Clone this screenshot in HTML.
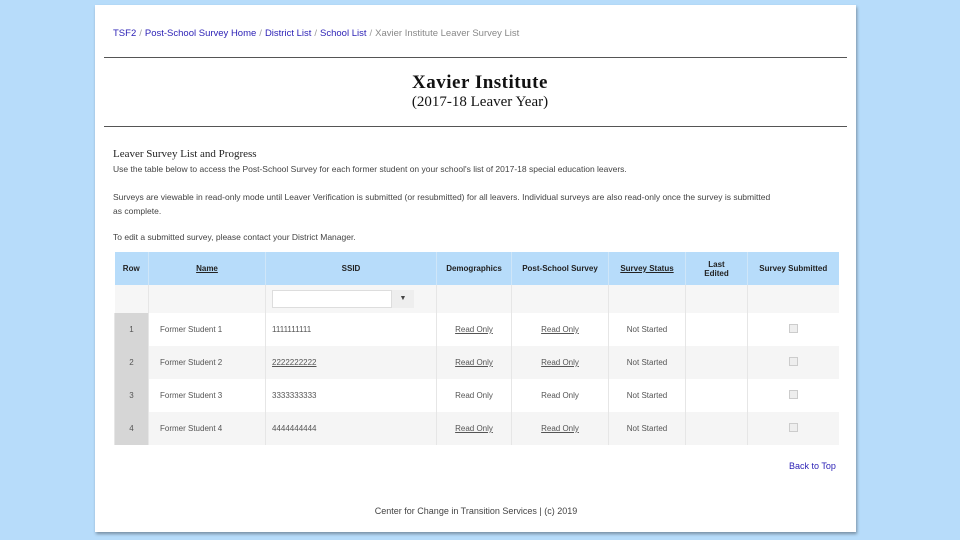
<!DOCTYPE html>
<html><head><meta charset="utf-8"><style>
body{margin:0;width:960px;height:540px;background:#b7dcfa;font-family:"Liberation Sans",sans-serif;position:relative;overflow:hidden}
.page{position:absolute;left:95px;top:5px;width:761px;height:527px;background:#fff;box-shadow:1px 2px 3px rgba(0,0,0,.35)}
.a{position:absolute;white-space:nowrap}
.bc{left:113px;top:28px;font-size:9.5px;color:#2a1fb5}
.bc .s{color:#999;margin:0 3px}
.bc .c{color:#888}
.hr{position:absolute;left:104px;width:743px;height:1px;background:#555}
.t1{left:0;width:960px;text-align:center;font-family:"Liberation Serif",serif;color:#111}
.p{left:113px;font-size:8.5px;color:#444}
table{position:absolute;left:114px;top:252px;width:724px;table-layout:fixed;border-collapse:collapse;font-size:8px;color:#555}
td,th{padding:0;border-left:1px solid #e6e6e6;text-align:center;overflow:hidden;white-space:nowrap}
th{background:#b7dcfa;height:33px;font-weight:bold;color:#222;border-left:1px solid #cfe6f8}
tr.f td{height:28px;background:#f6f6f6}
tr.r td{height:33px;background:#fff}
tr.r:nth-child(even) td{background:#f5f5f5}
tr.r td.n{background:#d6d6d6;color:#555}
td.l{text-align:left;padding-left:11px}
td.l6{text-align:left;padding-left:6px}
.cb{display:inline-block;width:7px;height:7px;border:1px solid #ccc;background:#eee}
</style></head><body>
<div class="page"></div>
<div class="a bc">TSF2<span class="s">/</span>Post-School Survey Home<span class="s">/</span>District List<span class="s">/</span>School List<span class="s">/</span><span class="c">Xavier Institute Leaver Survey List</span></div>
<div class="hr" style="top:57px"></div>
<div class="a t1" style="top:72px;font-size:19px;font-weight:bold;letter-spacing:0.5px">Xavier Institute</div>
<div class="a t1" style="top:94px;font-size:15px">(2017-18 Leaver Year)</div>
<div class="hr" style="top:126px"></div>
<div class="a" style="left:113px;top:148px;font-family:'Liberation Serif',serif;font-size:11px;color:#222">Leaver Survey List and Progress</div>
<div class="a p" style="top:164px">Use the table below to access the Post-School Survey for each former student on your school's list of 2017-18 special education leavers.</div>
<div class="a p" style="top:192px">Surveys are viewable in read-only mode until Leaver Verification is submitted (or resubmitted) for all leavers. Individual surveys are also read-only once the survey is submitted</div>
<div class="a p" style="top:206px">as complete.</div>
<div class="a p" style="top:232px">To edit a submitted survey, please contact your District Manager.</div>
<table>
<colgroup><col style="width:34px"><col style="width:117px"><col style="width:171px"><col style="width:75px"><col style="width:97px"><col style="width:77px"><col style="width:62px"><col style="width:91px"></colgroup>
<tr><th style="border-left:none">Row</th><th><u>Name</u></th><th>SSID</th><th>Demographics</th><th>Post-School Survey</th><th><u>Survey Status</u></th><th>Last<br>Edited</th><th>Survey Submitted</th></tr>
<tr class="f"><td style="border-left:none"></td><td></td><td class="l6"><span style="display:inline-block;width:118px;height:16px;border:1px solid #ddd;background:#fff;vertical-align:middle"></span><span style="display:inline-block;width:22px;height:18px;background:#eee;vertical-align:middle;font-size:7px;color:#444;line-height:18px;text-align:center">▼</span></td><td></td><td></td><td></td><td></td><td></td></tr>
<tr class="r"><td class="n">1</td><td class="l">Former Student 1</td><td class="l6">1111111111</td><td><u>Read Only</u></td><td><u>Read Only</u></td><td>Not Started</td><td></td><td><span class="cb"></span></td></tr>
<tr class="r"><td class="n">2</td><td class="l">Former Student 2</td><td class="l6"><u>2222222222</u></td><td><u>Read Only</u></td><td><u>Read Only</u></td><td>Not Started</td><td></td><td><span class="cb"></span></td></tr>
<tr class="r"><td class="n">3</td><td class="l">Former Student 3</td><td class="l6">3333333333</td><td>Read Only</td><td>Read Only</td><td>Not Started</td><td></td><td><span class="cb"></span></td></tr>
<tr class="r"><td class="n">4</td><td class="l">Former Student 4</td><td class="l6">4444444444</td><td><u>Read Only</u></td><td><u>Read Only</u></td><td>Not Started</td><td></td><td><span class="cb"></span></td></tr>
</table>
<div class="a" style="left:789px;top:461px;font-size:9px;color:#2a1fb5">Back to Top</div>
<div class="a" style="left:0;width:952px;text-align:center;top:506px;font-size:9px;color:#444">Center for Change in Transition Services | (c) 2019</div>
</body></html>
